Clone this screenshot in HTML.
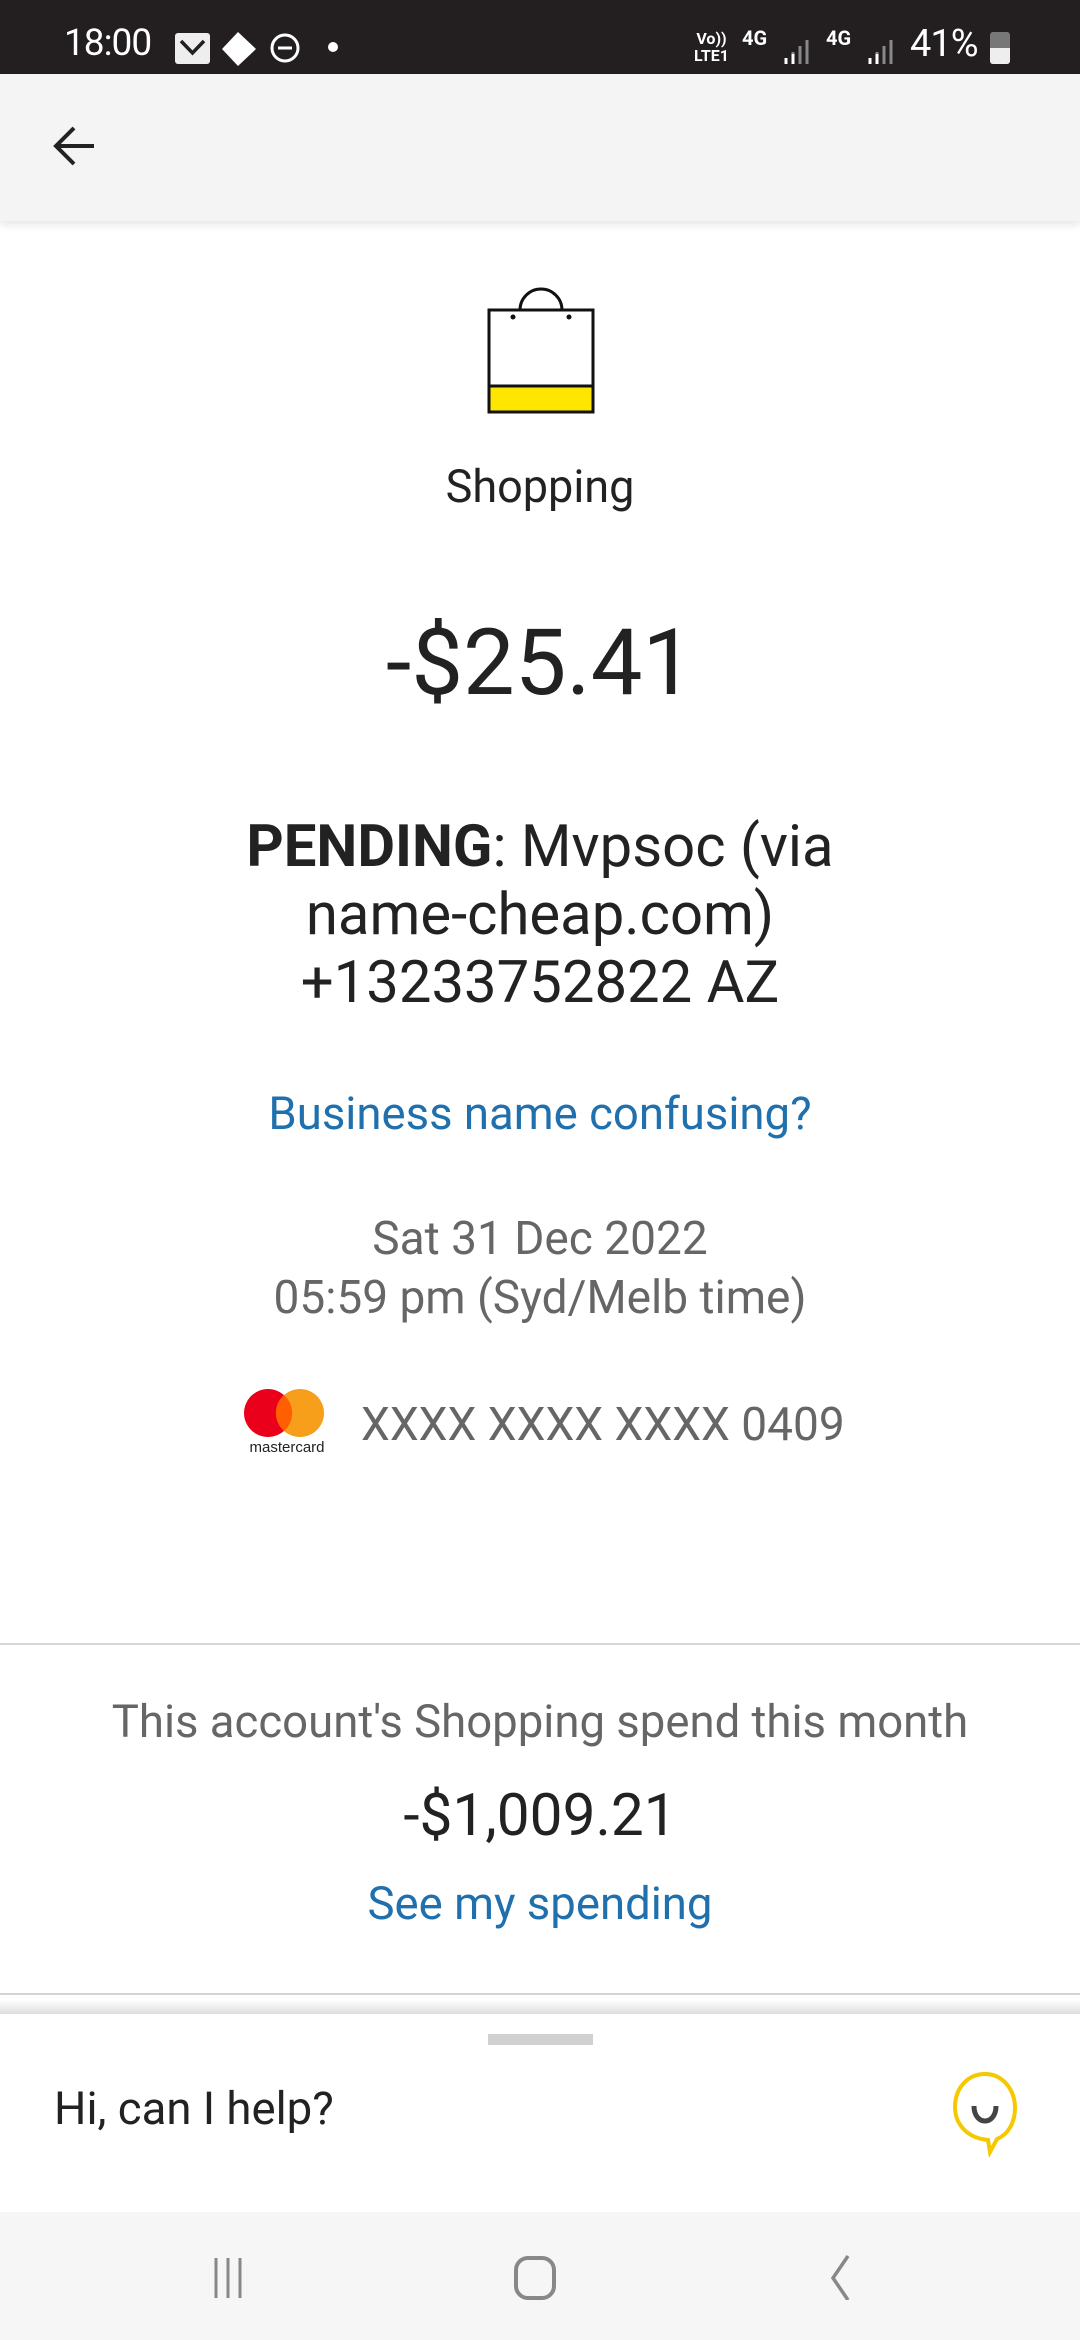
<!DOCTYPE html>
<html><head><meta charset="utf-8"><style>
*{margin:0;padding:0;box-sizing:border-box}
body{width:1080px;height:2340px;position:relative;background:#fff;font-family:"Roboto","Liberation Sans",sans-serif;color:#222;overflow:hidden}
.a{position:absolute}
.c{position:absolute;left:0;width:1080px;text-align:center}
</style></head><body>
<div class="a" style="left:0;top:0;width:1080px;height:74px;background:#231f20"></div>
<div class="a" style="left:64px;top:22px;color:#fff;font-size:37px;letter-spacing:-1px">18:00</div>
<div class="a" style="left:175px;top:33px;width:35px;height:31px;background:#eee;border-radius:3px"></div>
<svg class="a" style="left:175px;top:33px" width="35" height="31"><path d="M6 8 L17.5 20 L29 8" stroke="#231f20" stroke-width="3.5" fill="none"/></svg>
<svg class="a" style="left:220px;top:30px" width="40" height="38"><path d="M18 2 L36 19 L18 36 L2 19Z" fill="#fff"/></svg>
<svg class="a" style="left:268px;top:31px" width="34" height="34"><circle cx="17" cy="17" r="13" stroke="#fff" stroke-width="3" fill="none"/><path d="M10 17h14" stroke="#fff" stroke-width="3"/></svg>
<div class="a" style="left:328px;top:42px;width:10px;height:10px;border-radius:50%;background:#fff"></div>
<div class="a" style="left:694px;top:30px;color:#fff;font-size:16px;line-height:17px;font-weight:bold;text-align:center">Vo))<br>LTE1</div>
<div class="a" style="left:742px;top:26px;color:#fff;font-size:20px;font-weight:bold">4G</div>
<div class="a" style="left:826px;top:26px;color:#fff;font-size:20px;font-weight:bold">4G</div>
<svg class="a" style="left:782px;top:32px" width="32" height="34"><path d="M4 32v-6M11 32v-12M18 32v-18M25 32v-24" stroke="#888" stroke-width="3"/><path d="M4 32v-6M11 32v-10" stroke="#fff" stroke-width="3"/></svg>
<svg class="a" style="left:866px;top:32px" width="32" height="34"><path d="M4 32v-6M11 32v-12M18 32v-18M25 32v-24" stroke="#888" stroke-width="3"/><path d="M4 32v-6M11 32v-10" stroke="#fff" stroke-width="3"/></svg>
<div class="a" style="left:910px;top:22px;color:#fff;font-size:38px;letter-spacing:-1px">41%</div>
<div class="a" style="left:990px;top:32px;width:20px;height:32px;border-radius:3px;background:#777;overflow:hidden"><div style="margin-top:16px;height:16px;background:#eee"></div></div>
<div class="a" style="left:0;top:74px;width:1080px;height:147px;background:#f4f4f4;box-shadow:0 4px 8px rgba(0,0,0,.1)"></div>
<svg class="a" style="left:50px;top:124px" width="48" height="44"><path d="M44 22H6M24 4L6 22L24 40" stroke="#222" stroke-width="4" fill="none"/></svg>
<svg class="a" style="left:486px;top:280px" width="110" height="135"><path d="M34 30 A20 20 0 0 1 76 30" stroke="#111" stroke-width="3" fill="none"/><rect x="3" y="30" width="104" height="102" fill="#fff" stroke="#111" stroke-width="3"/><rect x="4.5" y="106" width="101" height="24.5" fill="#ffe600"/><path d="M3 106h104" stroke="#111" stroke-width="3"/><circle cx="27" cy="37" r="2.5" fill="#111"/><circle cx="83" cy="37" r="2.5" fill="#111"/></svg>
<div class="c" style="top:460px;font-size:45px">Shopping</div>
<div class="c" style="top:610px;font-size:92px">-$25.41</div>
<div class="c" style="top:813px;font-size:58px;line-height:68px"><b>PENDING</b>: Mvpsoc (via<br>name-cheap.com)<br>+13233752822 AZ</div>
<div class="c" style="top:1088px;font-size:45.5px;color:#1f70ad">Business name confusing?</div>
<div class="c" style="top:1210px;font-size:46px;line-height:59px;color:#666">Sat 31 Dec 2022<br>05:59 pm (Syd/Melb time)</div>
<svg class="a" style="left:244px;top:1386px" width="90" height="70"><circle cx="24" cy="27" r="24" fill="#eb001b"/><circle cx="56" cy="27" r="24" fill="#f79e1b"/><path d="M40 9 A24 24 0 0 1 40 45 A24 24 0 0 1 40 9Z" fill="#ff5f00"/><text x="43" y="66" font-size="15" text-anchor="middle" fill="#222" font-family="Liberation Sans">mastercard</text></svg>
<div class="a" style="left:361px;top:1398px;font-size:46px;color:#666">XXXX XXXX XXXX 0409</div>
<div class="a" style="left:0;top:1643px;width:1080px;height:2px;background:#d8d8d8"></div>
<div class="c" style="top:1696px;font-size:45.5px;color:#666">This account's Shopping spend this month</div>
<div class="c" style="top:1782px;font-size:58.5px;color:#222">-$1,009.21</div>
<div class="c" style="top:1878px;font-size:45.5px;color:#1f70ad">See my spending</div>
<div class="a" style="left:0;top:1993px;width:1080px;height:2px;background:#d4d4d4"></div>
<div class="a" style="left:0;top:2000px;width:1080px;height:14px;background:linear-gradient(#fff,#ddd)"></div>
<div class="a" style="left:488px;top:2034px;width:105px;height:11px;background:#d0d0d0"></div>
<div class="a" style="left:54px;top:2083px;font-size:45.5px;color:#222">Hi, can I help?</div>
<svg class="a" style="left:945px;top:2070px" width="80" height="90"><path d="M40 4 C58 4 70 20 70 38 C70 54 62 65 52 69 L45 82 L43 70 C22 68 10 54 10 37 C10 19 22 4 40 4Z" fill="none" stroke="#f5c800" stroke-width="4"/><path d="M29 36 C29 56 51 56 51 36" fill="none" stroke="#444" stroke-width="5"/></svg>
<div class="a" style="left:0;top:2212px;width:1080px;height:128px;background:#f6f6f6"></div>
<svg class="a" style="left:210px;top:2250px" width="50" height="50"><path d="M6 8v40M18 8v40M30 8v40" stroke="#888" stroke-width="3"/></svg>
<svg class="a" style="left:510px;top:2250px" width="50" height="50"><rect x="6" y="8" width="38" height="40" rx="12" fill="none" stroke="#888" stroke-width="4"/></svg>
<svg class="a" style="left:815px;top:2250px" width="50" height="50"><path d="M33 6L18 28L33 50" stroke="#888" stroke-width="3.5" fill="none"/></svg>
</body></html>
